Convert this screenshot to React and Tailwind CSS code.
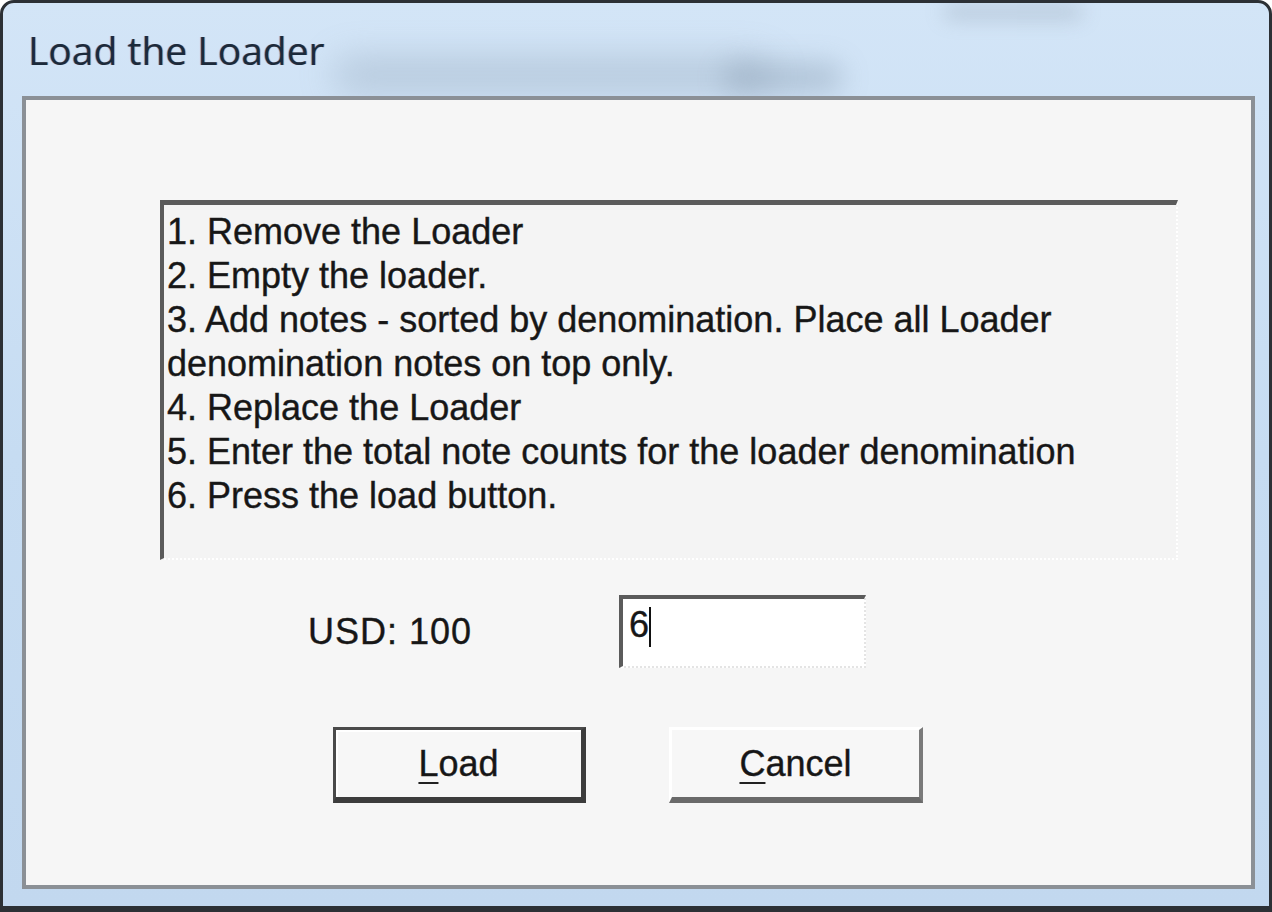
import React from "react";

const steps = [
  "1. Remove the Loader",
  "2. Empty the loader.",
  "3. Add notes - sorted by denomination. Place all Loader",
  "denomination notes on top only.",
  "4. Replace the Loader",
  "5. Enter the total note counts for the loader denomination",
  "6. Press the load button.",
];

// old-school MS Sans Serif look: slightly heavier strokes
const inkStyle = { WebkitTextStroke: "0.4px #222" };

export default function App() {
  return (
    <div
      className="relative h-[912px] w-[1272px] overflow-hidden rounded-t-[14px] border-x-[3px] border-t-[3px] border-b-[6px] border-[#2c3035] bg-gradient-to-b from-[#d3e5f7] via-[#c6dcf2] to-[#c2d8ef]"
      style={{ fontFamily: '"Liberation Sans", Arial, sans-serif' }}
    >
      {/* blurred desktop bleeding through the glass frame */}
      <div className="pointer-events-none absolute left-[330px] top-[55px] h-[34px] w-[440px] rounded-full bg-[#8a9db1] opacity-40 blur-[18px]" />
      <div className="pointer-events-none absolute left-[720px] top-[60px] h-[30px] w-[120px] rounded-full bg-[#7d91a6] opacity-40 blur-[14px]" />
      <div className="pointer-events-none absolute left-[940px] top-[2px] h-[14px] w-[140px] rounded-full bg-[#8a9aab] opacity-40 blur-[10px]" />

      <div className="relative flex h-[93px] items-center pl-[25px]">
        <span
          className="text-[39px] leading-none text-[#1b2a3b]"
          style={{ fontFamily: '"Open Sans", "Liberation Sans", sans-serif', textShadow: "1px 0 0 rgba(170,110,40,0.35), -1px 0 0 rgba(60,90,200,0.35)" }}
        >
          Load the Loader
        </span>
      </div>

      <div className="relative ml-[19px] flex h-[793px] w-[1233px] flex-col border-[4px] border-[#8b9096] bg-[#f6f6f6]">
        <div className="ml-[134px] mt-[100px] h-[360px] w-[1018px] border-t-[5px] border-l-[4px] border-r-2 border-b-2 border-solid [border-right-style:dotted] [border-bottom-style:dotted] border-t-[#5b5b5b] border-l-[#5b5b5b] border-r-white border-b-white bg-[#f4f4f4] pl-[3px] pt-[5px]">
          {steps.map((s) => (
            <div key={s} className="whitespace-nowrap text-[36px] leading-[44px] text-[#161616]" style={inkStyle}>
              {s}
            </div>
          ))}
        </div>

        <div className="mt-[35px] flex h-[73px] items-center">
          <div className="ml-[282px] w-[311px] text-[36px] tracking-[1px] text-[#161616]" style={inkStyle}>
            USD: 100
          </div>
          <div className="flex h-[73px] w-[247px] items-start border-t-[4px] border-l-[4px] border-r-2 border-b-2 border-solid [border-right-style:dotted] [border-bottom-style:dotted] border-t-[#5b5b5b] border-l-[#5b5b5b] border-r-[#e4e4e4] border-b-[#e4e4e4] bg-white pl-[6px] pt-[6px]">
            <span className="text-[36px] leading-[40px] text-[#161616]" style={inkStyle}>6</span>
            <span className="mt-[2px] h-[40px] w-[2px] bg-[#111]" />
          </div>
        </div>

        <div className="ml-[307px] mt-[59px] flex gap-[83px]">
          <button className="flex h-[76px] w-[253px] items-center justify-center border-t-[3px] border-l-[3px] border-r-[5px] border-b-[6px] border-t-[#4a4a4a] border-l-[#4a4a4a] border-r-[#3c3c3c] border-b-[#3c3c3c] bg-[#f7f7f7] text-[36px] text-[#161616] shadow-[inset_2px_2px_0_#ffffff]" style={inkStyle}>
            <span>
              <span className="underline decoration-2 underline-offset-[6px]">L</span>oad
            </span>
          </button>
          <button className="flex h-[76px] w-[254px] items-center justify-center border-t-[3px] border-l-[3px] border-r-[4px] border-b-[6px] border-t-white border-l-white border-r-[#7a7a7a] border-b-[#6a6a6a] bg-[#f7f7f7] text-[36px] text-[#161616]" style={inkStyle}>
            <span>
              <span className="underline decoration-2 underline-offset-[6px]">C</span>ancel
            </span>
          </button>
        </div>
      </div>
    </div>
  );
}
